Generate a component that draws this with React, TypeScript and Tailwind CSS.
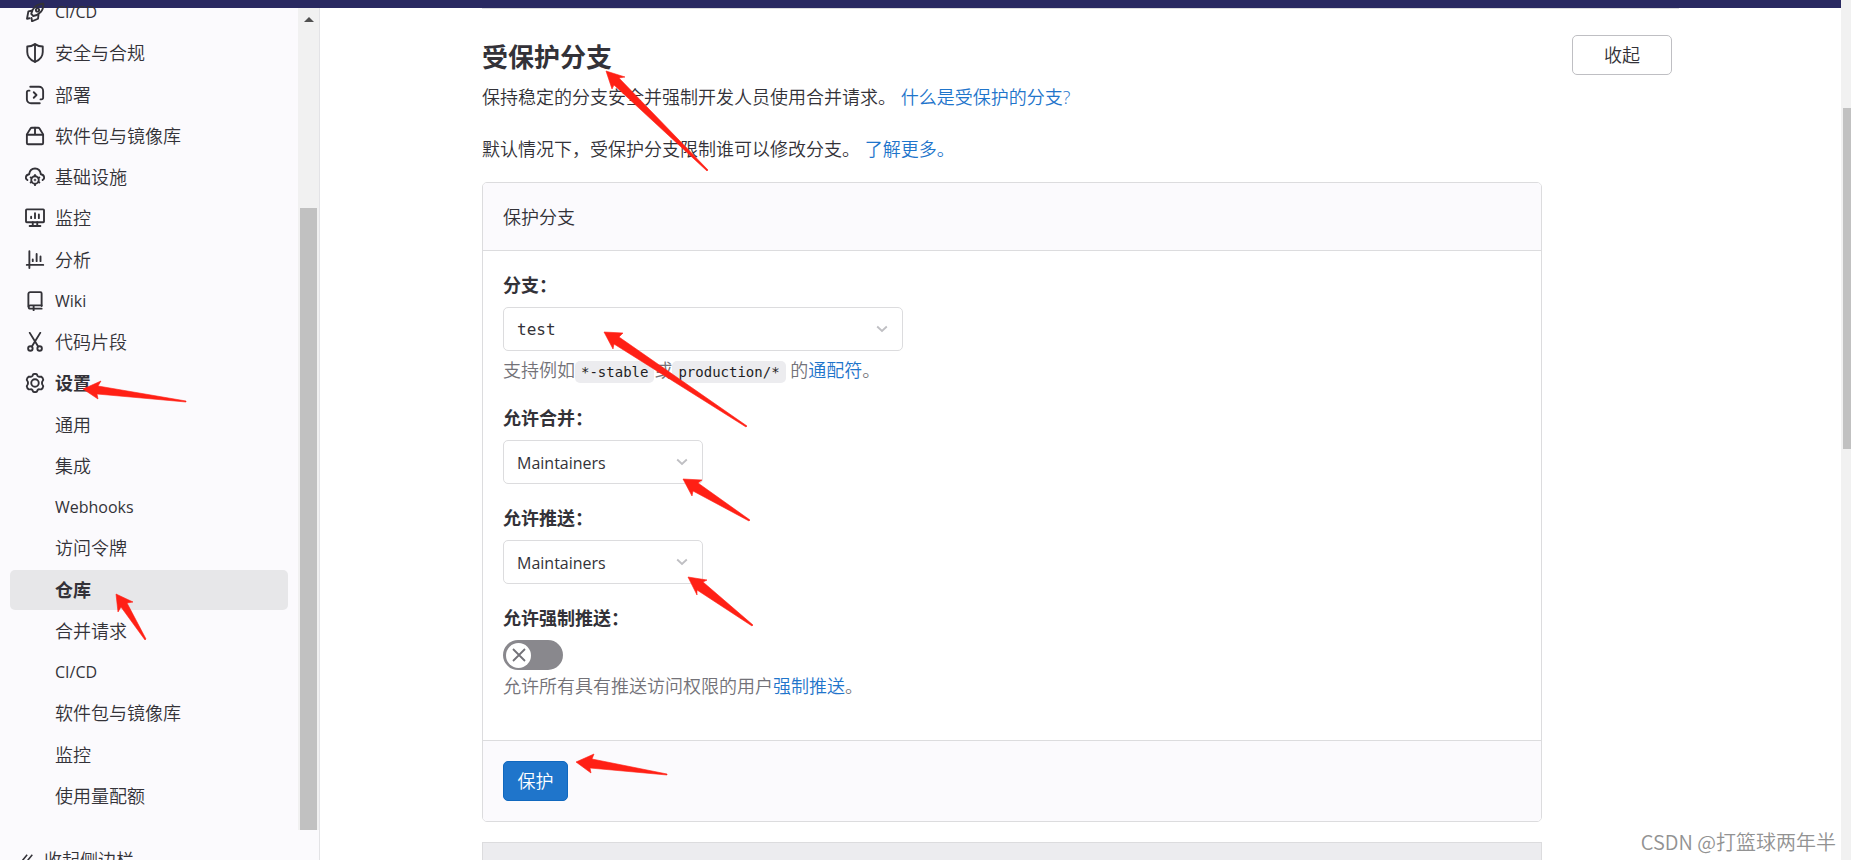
import { useState, type ReactNode } from "react";

const iconPaths: Record<string, ReactNode> = {
  rocket: (
    <>
      <path d="M5 9.5C5.6 5.3 9 1.6 14.7 1.3 15 7 11.2 10.6 6.6 11.2z" />
      <path d="M5.3 7 2.7 7.5 1.6 13.400l2-.4M10.800 10.2l-.4 3.200L5.600 15.400l-.4-2.600" />
      <circle cx="10" cy="6.400" r="1.300" />
    </>
  ),
  shield: (
    <>
      <path d="M8 .9c2 1.3 4.3 1.9 6.2 1.9v4.4c0 3.9-2.6 6.5-6.2 8-3.600-1.500-6.200-4.100-6.200-8V2.800C3.700 2.800 6 2.200 8 .9z" />
      <path d="M8 1v14" />
    </>
  ),
  deploy: (
    <>
      <path d="M4.2 1.400h7a3.300 3.300 0 0 1 3.300 3.300v5.500a1.300 1.300 0 0 1-1.300 1.300h-.8" />
      <path d="M11.800 14.600H4.800a3.300 3.300 0 0 1-3.300-3.300V5.800a1.300 1.300 0 0 1 1.300-1.300h.8" />
      <path d="M7 5.800 9.200 8 7 10.200" />
    </>
  ),
  package: (
    <>
      <path d="M1.500 6.700 4.400 2q.4-.6 1.100-.6h5q.7 0 1.100.6l2.900 4.700v6.900a1 1 0 0 1-1 1H2.500a1 1 0 0 1-1-1z" />
      <path d="M1.500 7h13M8 1.400V7" />
    </>
  ),
  cloudGear: (
    <>
      <path d="M1.900 10.400C0 9.300.3 6.300 3.300 5.800 3.700 2.900 5.600 1.200 8 1.200s4.300 1.700 4.700 4.600c3 .5 3.300 3.500 1.400 4.600" />
      <path d="M8 6.300v1M8 13.500v1M4.500 8.300l.8.500M10.700 11.900l.8.500M4.500 12.400l.8-.5M10.700 8.800l.8-.5" />
      <circle cx="8" cy="10.400" r="3" />
      <circle cx="8" cy="10.400" r=".3" />
    </>
  ),
  monitor: (
    <>
      <rect x=".8" y="1.100" width="14.400" height="10.300" rx=".6" />
      <path d="M4.900 7v1.100M8 4.200v3.900M11.100 5.100v3M6.200 11.400v2.800M9.800 11.400v2.800M3.700 14.400h8.600" />
    </>
  ),
  chart: (
    <path d="M3.500 1v13.400M1.400 11.900h13.200M6.200 7.500v1.400M9.300 3.200v5.700M12.400 5.200v3.700" />
  ),
  book: (
    <>
      <path d="M13.300 12V1.900a1 1 0 0 0-1-1H4.200a1.500 1.500 0 0 0-1.500 1.500v9.800" />
      <path d="M13.300 11.500H4.200a1.300 1.300 0 0 0 0 2.600h9.100M6.900 11.800v3.600" />
    </>
  ),
  scissors: (
    <>
      <path d="M3.800 .7 10.400 11.400M12.200 .7 5.600 11.400" />
      <circle cx="4.300" cy="13.200" r="1.800" />
      <circle cx="11.700" cy="13.200" r="1.800" />
    </>
  ),
  gear: (
    <>
      <path d="M6.500 1.100q1.500-.9 3 0l.6 1.300q.5.700 1.400.6l1.500-.1q1.400.9 1.600 2.600l-.8 1.400q-.4 1.100 0 2.200l.8 1.400q-.2 1.700-1.600 2.600l-1.500-.1q-.9-.1-1.400.6l-.6 1.300q-1.500.9-3 0l-.6-1.300q-.5-.7-1.400-.6l-1.500.1q-1.400-.9-1.600-2.600l.8-1.400q.4-1.100 0-2.200l-.8-1.400q.2-1.700 1.600-2.600l1.500.1q.9.100 1.400-.6z" />
      <circle cx="8" cy="8" r="3" />
    </>
  ),
};

function NavIcon({ name }: { name: string }) {
  return (
    <svg
      viewBox="0 0 16 16"
      className="size-5 shrink-0"
      fill="none"
      stroke="currentColor"
      strokeWidth="1.500"
      strokeLinecap="round"
      strokeLinejoin="round"
      aria-hidden="true"
    >
      {iconPaths[name]}
    </svg>
  );
}

type Item = { label: string; icon?: string; bold?: boolean; active?: boolean; latin?: boolean };

const items: Item[] = [
  { label: "CI/CD", icon: "rocket", latin: true },
  { label: "安全与合规", icon: "shield" },
  { label: "部署", icon: "deploy" },
  { label: "软件包与镜像库", icon: "package" },
  { label: "基础设施", icon: "cloudGear" },
  { label: "监控", icon: "monitor" },
  { label: "分析", icon: "chart" },
  { label: "Wiki", icon: "book", latin: true },
  { label: "代码片段", icon: "scissors" },
  { label: "设置", icon: "gear", bold: true },
  { label: "通用" },
  { label: "集成" },
  { label: "Webhooks", latin: true },
  { label: "访问令牌" },
  { label: "仓库", bold: true, active: true },
  { label: "合并请求" },
  { label: "CI/CD", latin: true },
  { label: "软件包与镜像库" },
  { label: "监控" },
  { label: "使用量配额" },
];

function itemText(item: Item) {
  if (item.bold) return "text-lg font-bold";
  return item.latin ? "text-base font-normal" : "text-lg font-[350]";
}

function Sidebar() {
  return (
    <aside className="flex w-80 shrink-0 flex-col border-r border-[#e3e3e6] bg-[#fbfafd]">
      <div className="flex min-h-0 flex-1">
        <ul className="-mt-4 flex flex-1 flex-col justify-between pr-2.5 pb-3.5 pl-2.5">
          {items.map((item, i) => (
            <li key={i}>
              <a
                href="#"
                className={`flex h-10 items-center gap-2.5 rounded-[5px] pl-[15px] ${
                  item.active ? "bg-[#e7e7e9]" : ""
                } ${itemText(item)}`}
              >
                {item.icon ? <NavIcon name={item.icon} /> : <span className="w-5" />}
                <span>{item.label}</span>
              </a>
            </li>
          ))}
        </ul>
        <div className="flex w-[21px] flex-col items-center bg-[#f1f1f1]" aria-hidden="true">
          <svg viewBox="0 0 10 5" className="mt-[9px] h-[5px] w-[10px]">
            <path d="M0 5 5 0l5 5z" fill="#505050" />
          </svg>
          <div className="mt-[186px] w-[17px] flex-1 bg-[#c1c1c1]" />
        </div>
      </div>
      <button type="button" className="flex h-[30px] items-start gap-2.5 overflow-hidden pt-4 pl-[22px] text-lg font-[350]">
        <svg viewBox="0 0 14 14" className="mt-2 size-3" fill="none" stroke="currentColor" strokeWidth="1.800" aria-hidden="true">
          <path d="M6 1 1 7l5 6M12 1 7 7l5 6" />
        </svg>
        收起侧边栏
      </button>
    </aside>
  );
}

function Select({
  id,
  label,
  value,
  width,
  mono,
  children,
}: {
  id: string;
  label: string;
  value: string;
  width: string;
  mono?: boolean;
  children?: ReactNode;
}) {
  return (
    <div>
      <label htmlFor={id} className="block font-bold leading-6">
        {label}
      </label>
      <div className={`relative mt-2.5 max-w-full ${width}`}>
        <select
          id={id}
          defaultValue={value}
          className={`h-11 w-full appearance-none rounded-[5px] border border-[#dcdcde] bg-white pt-0.5 pl-[13px] text-base font-normal ${
            mono ? "font-['DejaVu_Sans_Mono',monospace]" : ""
          }`}
        >
          <option>{value}</option>
        </select>
        <svg
          viewBox="0 0 12 8"
          className="pointer-events-none absolute top-[18px] right-[15px] h-2 w-3"
          fill="none"
          stroke="#bfbfc3"
          strokeWidth="1.800"
          aria-hidden="true"
        >
          <path d="M1.200 1.500 6 6l4.800-4.500" />
        </svg>
      </div>
      {children}
    </div>
  );
}

function Link({ children }: { children: ReactNode }) {
  return (
    <a href="#" className="text-[#1f75cb]">
      {children}
    </a>
  );
}

function Code({ children }: { children: ReactNode }) {
  return (
    <code className="rounded-[5px] bg-[#ececef] px-1.5 py-[3px] font-['DejaVu_Sans_Mono',monospace] text-sm text-[#1f1e24]">
      {children}
    </code>
  );
}

const arrows = [
  "83,389 101,381 98,386 186,401 186,402 97,394 98,399",
  "116,594 133,602 127,603 146,639 145,640 121,607 118,612",
  "606,71 625,77 619,78 708,170 707,171 614,85 612,89",
  "604,332 623,333 619,337 747,426 746,427 614,344 613,349",
  "683,479 702,480 698,483 750,520 749,521 693,491 692,496",
  "688,577 707,580 703,582 753,625 752,626 697,590 697,595",
  "576,762 594,754 592,759 667,774 667,775 590,768 591,773",
];

export default function App() {
  const [force, setForce] = useState(false);

  return (
    <div className="relative flex h-screen overflow-hidden bg-white font-['Open_Sans','Noto_Sans_CJK_SC',sans-serif] text-lg font-[350] text-[#333238]">
      <div className="flex min-w-0 flex-1 flex-col">
        <header className="h-2 shrink-0 bg-[#292961]" />
        <div className="flex min-h-0 flex-1">
          <Sidebar />
          <main className="min-w-0 flex-1 overflow-hidden">
            <div className="mx-auto max-w-[1197px] border-t border-[#dcdcde]">
              <section className="flex items-start justify-between pt-[26px] pr-[7px]">
                <div className="pt-1.5">
                  <h2 className="text-[26px] leading-8 font-bold">受保护分支</h2>
                  <p className="mt-3 leading-6">
                    保持稳定的分支安全并强制开发人员使用合并请求。 <Link>什么是受保护的分支?</Link>
                  </p>
                  <p className="mt-7 leading-6">
                    默认情况下，受保护分支限制谁可以修改分支。 <Link>了解更多。</Link>
                  </p>
                </div>
                <button type="button" className="h-10 w-[100px] rounded-[5px] border border-[#bfbfc3] bg-white">
                  收起
                </button>
              </section>

              <form className="mt-[21px] mr-[137px] rounded-[5px] border border-[#dcdcde]">
                <div className="rounded-t border-b border-[#dcdcde] bg-[#fbfafd] px-5 pt-[22px] pb-[21px] leading-6">
                  保护分支
                </div>
                <div className="flex flex-col gap-[22px] px-5 pt-[22px] pb-10">
                  <Select id="branch" label="分支：" value="test" width="w-[400px]" mono>
                    <p className="mt-1.5 leading-[27px] text-[#737278]">
                      支持例如<Code>*-stable</Code>或<Code>production/*</Code> 的<Link>通配符</Link>。
                    </p>
                  </Select>
                  <Select id="merge" label="允许合并：" value="Maintainers" width="w-[200px]" />
                  <Select id="push" label="允许推送：" value="Maintainers" width="w-[200px]" />
                  <div>
                    <div id="force-label" className="font-bold leading-6">
                      允许强制推送：
                    </div>
                    <button
                      type="button"
                      role="switch"
                      aria-checked={force}
                      aria-labelledby="force-label"
                      onClick={() => setForce(!force)}
                      className={`mt-2.5 flex h-[30px] w-[60px] items-center rounded-full px-[3px] ${
                        force ? "justify-end bg-[#1f75cb]" : "bg-[#89888d]"
                      }`}
                    >
                      <span className="flex size-[25px] items-center justify-center rounded-full bg-white">
                        <svg viewBox="0 0 14 14" className="size-3.5" stroke="#737278" strokeWidth="1.800" aria-hidden="true">
                          <path d="M1 1l12 12M13 1 1 13" />
                        </svg>
                      </span>
                    </button>
                    <p className="mt-[3px] leading-[27px] text-[#737278]">
                      允许所有具有推送访问权限的用户<Link>强制推送</Link>。
                    </p>
                  </div>
                </div>
                <div className="rounded-b border-t border-[#dcdcde] bg-[#fbfafd] px-5 py-5">
                  <button
                    type="button"
                    className="block h-10 w-[65px] rounded-[5px] border border-[#1068bf] bg-[#1f75cb] text-white"
                  >
                    保护
                  </button>
                </div>
              </form>
              <div className="mt-5 mr-[137px] h-20 border border-[#dcdcde] bg-[#ececef]" />
            </div>
          </main>
        </div>
      </div>
      <div className="w-2.5 shrink-0 bg-[#f1f1f1] pt-[108px] pl-0.5" aria-hidden="true">
        <div className="h-[341px] bg-[#c1c1c1]" />
      </div>

      <svg viewBox="0 0 1851 860" className="pointer-events-none absolute top-0 left-0 h-[860px] w-[1851px]" aria-hidden="true">
        {arrows.map((points) => (
          <polygon key={points} points={points} fill="#ff2015" stroke="#ff2015" strokeWidth=".6" />
        ))}
      </svg>
      <div className="absolute right-[15px] bottom-1 font-['Noto_Sans_CJK_SC',sans-serif] text-xl leading-7 text-[#929292]">
        CSDN @打篮球两年半
      </div>
    </div>
  );
}
